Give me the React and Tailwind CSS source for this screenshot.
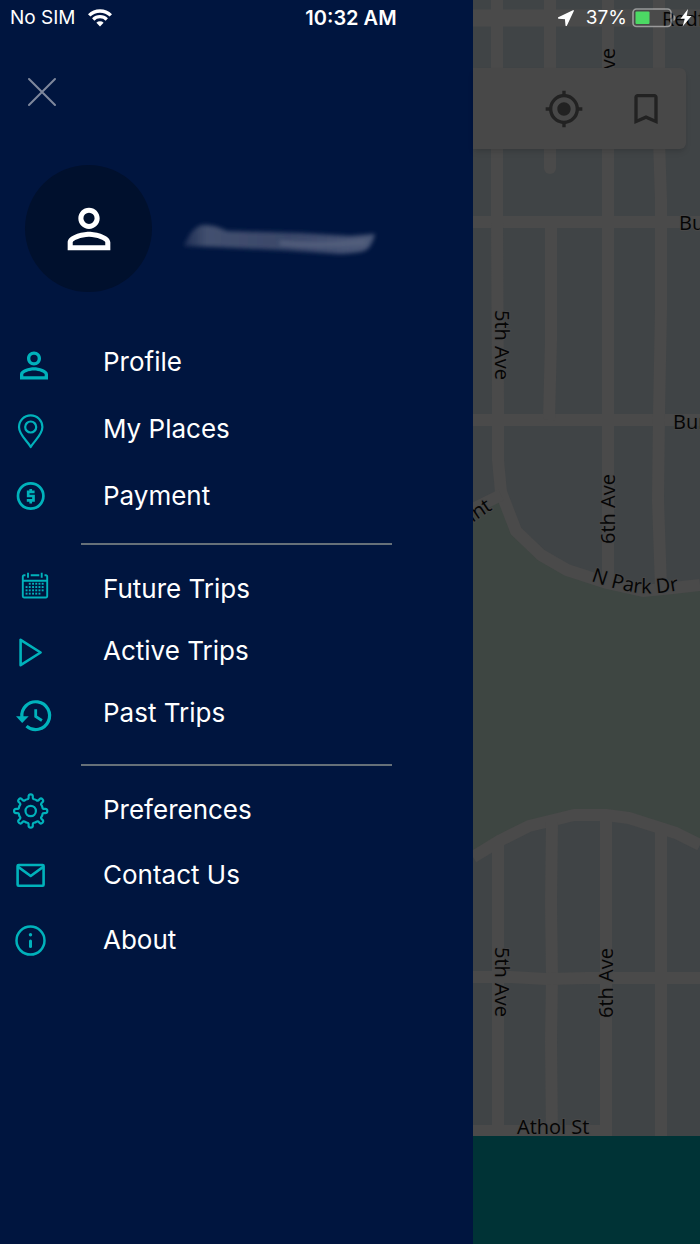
import { clsx } from "clsx";
import { MdBookmarkBorder, MdMyLocation, MdOutlinePersonOutline } from "react-icons/md";

const PERSON =
  "M12 5.9a2.1 2.1 0 1 1 0 4.2 2.1 2.1 0 0 1 0-4.2m0 9c2.97 0 6.1 1.46 6.1 2.1v1.1H5.9V17c0-.64 3.13-2.1 6.1-2.1M12 4C9.79 4 8 5.79 8 8s1.79 4 4 4 4-1.79 4-4-1.79-4-4-4zm0 9c-2.67 0-8 1.34-8 4v3h16v-3c0-2.66-5.33-4-8-4z";

// closed curve through the midpoints of a ring of control points, 8 teeth
function gearPath(cx, cy) {
  const ring = [];
  for (let i = 0; i < 8; i++) {
    [[-8, 16.8], [8, 16.8], [9, 12], [22.5, 12.6], [36, 12]].forEach(([deg, r]) => {
      const a = ((i * 45 + deg) * Math.PI) / 180;
      ring.push([cx + r * Math.sin(a), cy - r * Math.cos(a)]);
    });
  }
  const mid = (p, q) => `${((p[0] + q[0]) / 2).toFixed(2)} ${((p[1] + q[1]) / 2).toFixed(2)}`;
  const start = mid(ring[ring.length - 1], ring[0]);
  const curves = ring.map((p, i) => `Q${p[0].toFixed(2)} ${p[1].toFixed(2)} ${mid(p, ring[(i + 1) % ring.length])}`);
  return `M${start}${curves.join("")}Z`;
}

const CALENDAR_DOTS = [
  [21.7, 25, 28.2, 31.4, 34.6],
  [18.5, 21.7, 25, 28.2, 31.4, 34.6],
  [18.5, 21.7, 25, 28.2, 31.4, 34.6],
  [18.5, 21.7, 25, 28.2, 31.4],
];

const icons = {
  profile: <path d={PERSON} transform="translate(5 6.500) scale(1.75)" fill="currentColor" stroke="none" />,
  places: (
    <g strokeWidth="2.2">
      <path d="M22.7 42C19.5 36 11 30 11 22a11.7 11.7 0 0 1 23.4 0C34.4 30 26 36 22.7 42Z" strokeLinejoin="round" />
      <circle cx="22.7" cy="22" r="5.5" />
    </g>
  ),
  payment: (
    <g strokeWidth="2.7">
      <circle cx="22.7" cy="24" r="12.7" />
      <path d="M26.6 19.8H20.200v4.200h5.300v4.400h-6.700M22.7 17v3M22.7 28.4v3" />
    </g>
  ),
  future: (
    <g strokeWidth="1.9">
      <path d="M17.5 11.3H16a1.2 1.2 0 0 0-1.2 1.2v19.8a1.2 1.2 0 0 0 1.2 1.2h22a1.2 1.2 0 0 0 1.2-1.2V12.5a1.2 1.2 0 0 0-1.2-1.2h-1.5M22.7 11.3h8.6M15 16.7h24M20 8.7v5M33.7 8.7v5" />
      {CALENDAR_DOTS.map((row, r) =>
        row.map((x) => <rect key={`${r}-${x}`} x={x - 0.9} y={18.8 + r * 3.3} width="1.9" height="1.9" fill="currentColor" stroke="none" />)
      )}
    </g>
  ),
  active: <path d="M12.6 13.8v25.4l20-12.7Z" strokeWidth="2.6" strokeLinejoin="round" />,
  past: (
    <g>
      <path d="M13.9 29.5a13.9 13.9 0 1 1 4.6 8.6" strokeWidth="3.2" />
      <path d="M8 28.3h12.7L14.2 35Z" fill="currentColor" stroke="none" />
      <path d="M27.7 21.3v7.2l6.2 4" strokeWidth="2.8" />
    </g>
  ),
  preferences: (
    <g strokeWidth="2.2">
      <path d={gearPath(22.7, 25)} />
      <circle cx="22.7" cy="25" r="5.2" />
    </g>
  ),
  contact: (
    <g strokeWidth="2.6" strokeLinejoin="round">
      <rect x="9.600" y="14" width="26" height="20.8" rx="1" />
      <path d="m9.8 15.6 12.9 9.4 12.8-9.4" />
    </g>
  ),
  about: (
    <g>
      <circle cx="22.5" cy="24.6" r="14" strokeWidth="2.500" />
      <circle cx="22.5" cy="18.8" r="1.7" fill="currentColor" stroke="none" />
      <path d="M22.5 25v5.500" strokeWidth="3" strokeLinecap="round" />
    </g>
  ),
};

const account = [
  { icon: "profile", label: "Profile" },
  { icon: "places", label: "My Places" },
  { icon: "payment", label: "Payment" },
];

const trips = [
  { icon: "future", label: "Future Trips" },
  { icon: "active", label: "Active Trips" },
  { icon: "past", label: "Past Trips" },
];

const support = [
  { icon: "preferences", label: "Preferences" },
  { icon: "contact", label: "Contact Us" },
  { icon: "about", label: "About" },
];

function MenuGroup({ items, rowClassName }) {
  return (
    <ul>
      {items.map(({ icon, label }) => (
        <li key={label}>
          <a href="#" className={clsx("flex items-center gap-[47px] pl-2 text-[26px] text-white", rowClassName)}>
            <svg viewBox="0 0 48 48" className="size-12 shrink-0 text-[#00b2bb]" fill="none" stroke="currentColor" aria-hidden>
              {icons[icon]}
            </svg>
            {label}
          </a>
        </li>
      ))}
    </ul>
  );
}

function StatusBar() {
  return (
    <header className="absolute inset-x-0 top-0 z-20 grid h-9 grid-cols-3 items-center pr-2 pl-[10px] text-[19px] text-white">
      <div className="flex items-center gap-3">
        <span>No SIM</span>
        <svg viewBox="0 0 24 18" className="h-[18px] w-6" fill="none" stroke="currentColor" aria-label="Wi-Fi" role="img">
          <path d="M1.2 6.4a15.3 15.3 0 0 1 21.6 0" strokeWidth="3.4" />
          <path d="M5.2 10.5a9.6 9.6 0 0 1 13.6 0" strokeWidth="3.2" />
          <path d="M12 17.4 8.4 13.8a5.1 5.1 0 0 1 7.2 0Z" fill="currentColor" stroke="none" />
        </svg>
      </div>
      <span className="text-center text-[20px] font-semibold">10:32 AM</span>
      <div className="flex items-center justify-end">
        <svg viewBox="0 0 16 16" className="mr-3 size-4" fill="currentColor" aria-hidden>
          <path d="M15.2.8.6 8l7 .6.6 6.800Z" stroke="currentColor" strokeWidth="1.4" strokeLinejoin="round" />
        </svg>
        <span className="mr-[5px]">37%</span>
        <svg viewBox="0 0 60 20" className="h-5 w-[60px]" aria-label="Battery charging" role="img">
          <rect x="1" y="1" width="38" height="17.5" rx="3.5" fill="none" stroke="#fff" strokeOpacity=".45" strokeWidth="1.6" />
          <rect x="3.5" y="3.5" width="14" height="12.5" rx="1" fill="#4cd964" />
          <path d="M41.5 7v6c1.6-.6 2-1.7 2-3s-.4-2.4-2-3Z" fill="#fff" fillOpacity=".45" />
          <path d="M56 1l-7.500 9.800h4.300L50.600 18.500 59.500 8h-4.800Z" fill="#fff" />
        </svg>
      </div>
    </header>
  );
}

function StreetMap() {
  return (
    <svg viewBox="473 0 227 1136" preserveAspectRatio="xMinYMin slice" className="absolute inset-0 h-full w-full bg-[#404446]" aria-label="Map" role="img">
      <path
        d="M473 508 501 494 516 531 541 555 567 570 607 583 643 591 673 588 700 585V845L676 833 629 818 606 815H574L529 826 501 840 473 857Z"
        fill="#3e4642"
      />
      <g fill="none" stroke="#4a4a4a" strokeWidth="12" strokeLinejoin="round">
        <path d="M473 18H700" strokeWidth="17" />
        <path d="M473 222H700M473 420H700" />
        <path d="M497 0V222L498 400V460L501 492 516 531 541 555 567 570 607 583 643 591 673 588 700 585" />
        <path d="M473 509 501 495" />
        <path d="M550 0V168" strokeLinecap="round" />
        <path d="M551 222V340L549 420" />
        <path d="M608 0V583" />
        <path d="M659 0V140L661 200V310L659 414 658 500 661 588" />
        <path d="M473 857 501 840 529 826 574 815H606L629 818 676 833 700 845" />
        <path d="M498 842V1136M552 822 551 903 552 979 551 1040 552 1136M606 815V1136M661 828V1136" />
        <path d="M473 977H510L547 979 587 978H700M473 1131H612" />
      </g>
      <path id="n-park-dr" d="M591 581Q610 588 632 592 655 596 690 588" fill="none" />
      <g
        fill="#050505"
        stroke="#484848"
        strokeWidth="2"
        strokeLinejoin="round"
        paintOrder="stroke"
        className="font-['Open_Sans',sans-serif] text-[20px] font-medium"
      >
        <text x="662" y="26">Redf</text>
        <text transform="translate(615 118) rotate(-90)">6th Ave</text>
        <text x="679" y="230">Bu</text>
        <text x="673" y="429">Bur</text>
        <text transform="translate(495 310) rotate(90)">5th Ave</text>
        <text transform="translate(615 544) rotate(-90)">6th Ave</text>
        <text transform="translate(493 509) rotate(-34)" textAnchor="end">int</text>
        <text>
          <textPath href="#n-park-dr">N Park Dr</textPath>
        </text>
        <text transform="translate(495 947) rotate(90)">5th Ave</text>
        <text transform="translate(613 1018) rotate(-90)">6th Ave</text>
        <text x="517" y="1134">Athol St</text>
      </g>
    </svg>
  );
}

export default function App() {
  return (
    <div className="relative grid min-h-screen grid-cols-[473px_minmax(0,1fr)] overflow-hidden font-['Inter',sans-serif]">
      <StatusBar />

      <aside className="bg-[#00153f] pt-16">
        <button type="button" aria-label="Close menu" className="ml-[14px] flex size-14 items-center justify-center text-[#7f889c]">
          <svg viewBox="0 0 30 30" className="size-[30px]" fill="none" stroke="currentColor" strokeWidth="2" strokeLinecap="round">
            <path d="m2 2 26 26M28 2 2 28" />
          </svg>
        </button>

        <div className="mt-[45px] flex items-center gap-7 pl-[25px]">
          <div className="flex size-[127px] items-center justify-center rounded-full bg-[#00102d] text-white">
            <MdOutlinePersonOutline className="size-16" />
          </div>
          <svg viewBox="180 197 200 64" className="h-16 w-[200px]" aria-hidden>
            <defs>
              <linearGradient id="smear-fade">
                <stop offset="0" stopColor="#3c486b" stopOpacity=".5" />
                <stop offset=".12" stopColor="#43506f" />
                <stop offset=".55" stopColor="#3a476a" />
                <stop offset="1" stopColor="#4b5878" />
              </linearGradient>
              <filter id="smear" x="-10%" y="-40%" width="120%" height="180%">
                <feGaussianBlur stdDeviation="2" />
              </filter>
            </defs>
            <g filter="url(#smear)">
              <path d="M184 246Q192 226 203 225T227 231L300 233 350 236 375 234Q371 249 364 251T340 254L280 250 215 247Z" fill="url(#smear-fade)" />
              <path d="M280 243Q320 247 366 242" fill="none" stroke="#56627f" strokeWidth="4" />
            </g>
          </svg>
        </div>

        <nav className="mt-9">
          <MenuGroup items={account} rowClassName="h-[67px]" />
          <hr className="mt-[14px] mr-[81px] mb-3 ml-[81px] border-t-2 border-[#667079]" />
          <MenuGroup items={trips} rowClassName="h-[62px]" />
          <hr className="mt-[21px] mr-[81px] mb-[11px] ml-[81px] border-t-2 border-[#667079]" />
          <MenuGroup items={support} rowClassName="h-[65px]" />
        </nav>
      </aside>

      <main className="flex flex-col">
        <div className="relative flex-1">
          <StreetMap />
          <div className="absolute top-[68px] right-[14px] left-0 flex h-[81px] items-center justify-end gap-[42px] rounded-r-md bg-[#484848] pr-5 text-[#222222] shadow-md">
            <button type="button" aria-label="My location">
              <MdMyLocation className="size-10" />
            </button>
            <button type="button" aria-label="Bookmarks">
              <MdBookmarkBorder className="size-10" />
            </button>
          </div>
        </div>
        <div className="h-[108px] bg-[#003336]" />
      </main>
    </div>
  );
}
